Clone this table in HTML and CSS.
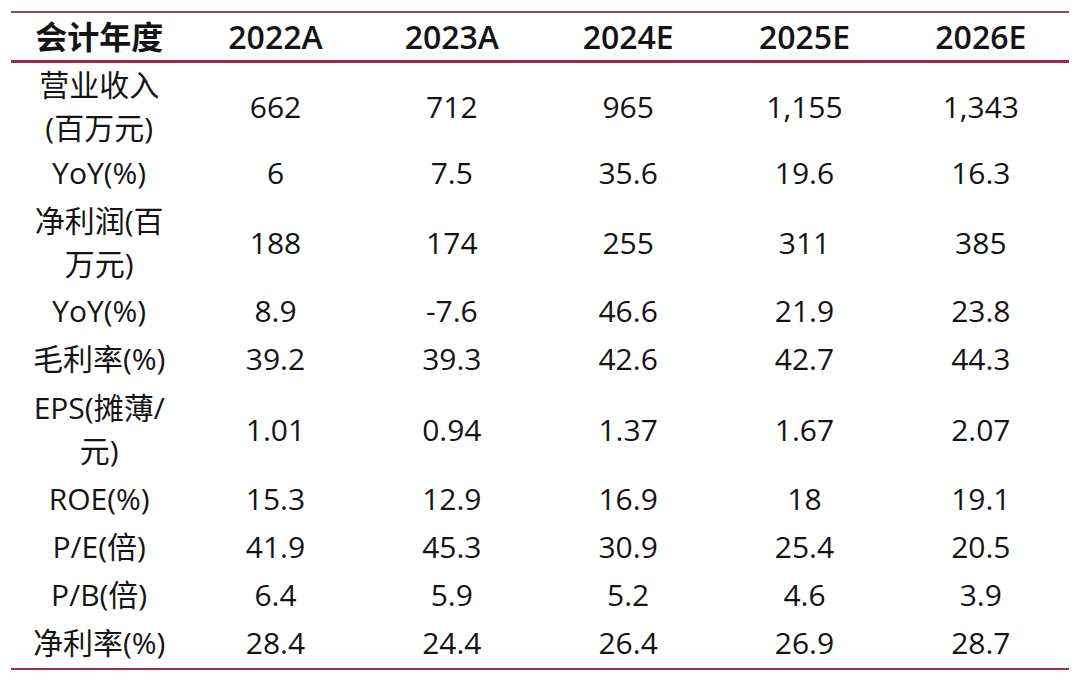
FILE: index.html
```html
<!DOCTYPE html>
<html lang="zh-CN">
<head>
<meta charset="utf-8">
<title>盈利预测</title>
<link rel="stylesheet" href="styles.css">
</head>
<body>
<table class="fin">
  <colgroup>
    <col><col><col><col><col><col>
  </colgroup>
  <thead>
    <tr>
      <th>会计年度</th><th>2022A</th><th>2023A</th><th>2024E</th><th>2025E</th><th>2026E</th>
    </tr>
  </thead>
  <tbody>
    <tr class="row-a"><td>营业收入<br>(百万元)</td><td>662</td><td>712</td><td>965</td><td>1,155</td><td>1,343</td></tr>
    <tr><td>YoY(%)</td><td>6</td><td>7.5</td><td>35.6</td><td>19.6</td><td>16.3</td></tr>
    <tr class="row-b"><td>净利润(百<br>万元)</td><td>188</td><td>174</td><td>255</td><td>311</td><td>385</td></tr>
    <tr><td>YoY(%)</td><td>8.9</td><td>-7.6</td><td>46.6</td><td>21.9</td><td>23.8</td></tr>
    <tr><td>毛利率(%)</td><td>39.2</td><td>39.3</td><td>42.6</td><td>42.7</td><td>44.3</td></tr>
    <tr class="row-c"><td>EPS(摊薄/<br>元)</td><td>1.01</td><td>0.94</td><td>1.37</td><td>1.67</td><td>2.07</td></tr>
    <tr><td>ROE(%)</td><td>15.3</td><td>12.9</td><td>16.9</td><td>18</td><td>19.1</td></tr>
    <tr><td>P/E(倍)</td><td>41.9</td><td>45.3</td><td>30.9</td><td>25.4</td><td>20.5</td></tr>
    <tr><td>P/B(倍)</td><td>6.4</td><td>5.9</td><td>5.2</td><td>4.6</td><td>3.9</td></tr>
    <tr class="last"><td>净利率(%)</td><td>28.4</td><td>24.4</td><td>26.4</td><td>26.9</td><td>28.7</td></tr>
  </tbody>
</table>
</body>
</html>
```

FILE: styles.css
```css
html, body {
  margin: 0;
  padding: 0;
  background: #ffffff;
}

body {
  padding: 11px 0 0 11px;
}

.fin {
  width: 1058px;
  table-layout: fixed;
  border-collapse: separate;
  border-spacing: 0;
  font-family: "Open Sans", "Noto Sans CJK SC", sans-serif;
  color: #141414;
}

.fin th,
.fin td {
  padding: 0;
  text-align: center;
  vertical-align: middle;
}

.fin th {
  height: 47px;
  font-size: 32px;
  font-weight: 600;
  line-height: 44px;
  border-top: 2px solid #8a4a5f;
  border-bottom: 3px solid #a3284f;
}

.fin td {
  height: 48px;
  font-size: 30px;
  font-weight: 400;
  line-height: 43px;
  padding-bottom: 3px;
  box-sizing: border-box;
}

.fin .row-a td { height: 87px; padding-bottom: 1px; }
.fin .row-b td { height: 90px; padding-bottom: 2px; }
.fin .row-c td { height: 92px; padding-bottom: 2px; }

.fin .last td {
  height: 50px;
  border-bottom: 2px solid #993157;
}
```
